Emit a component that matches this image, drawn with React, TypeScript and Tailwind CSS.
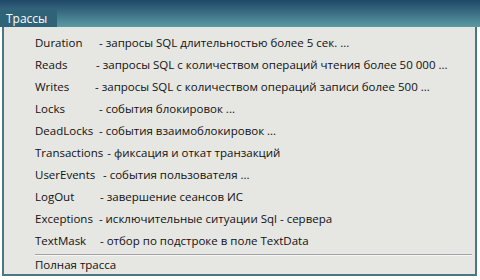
import React from "react";

const rows = [
  { name: "Duration", w: "min-w-[64px]", desc: "- запросы SQL длительностью более 5 сек. ..." },
  { name: "Reads", w: "min-w-[61px]", desc: "- запросы SQL с количеством операций чтения более 50 000 ..." },
  { name: "Writes", w: "min-w-[60px]", desc: "- запросы SQL с количеством операций записи более 500 ..." },
  { name: "Locks", w: "min-w-[64px]", desc: "- события блокировок ..." },
  { name: "DeadLocks", w: "min-w-[64px]", desc: "- события взаимоблокировок ..." },
  { name: "Transactions", w: "pr-[4px]", desc: "- фиксация и откат транзакций" },
  { name: "UserEvents", w: "min-w-[68px]", desc: "- события пользователя ..." },
  { name: "LogOut", w: "min-w-[65px]", desc: "- завершение сеансов ИС" },
  { name: "Exceptions", w: "pr-[6px]", desc: "- исключительные ситуации Sql - сервера" },
  { name: "TextMask", w: "min-w-[65px]", desc: "- отбор по подстроке в поле TextData" },
];

export default function App() {
  return (
    <div className="w-[480px] h-[280px] bg-white text-[11.5px] text-[#111111] font-['Open_Sans',sans-serif] overflow-hidden">
      <div className="h-[27px] bg-gradient-to-b from-[#1f4868] to-[#5c9ba2] flex items-end">
        <div className="h-[17px] w-[57px] bg-[#2f6378] text-white text-[12px] leading-[17px] pl-[6px]">
          Трассы
        </div>
      </div>
      <div className="ml-[2px] w-[475px] h-[249px] border-[2px] border-t-0 border-[#4b7682] bg-[#e6e6e2] pt-[5px]">
        {rows.map((r) => (
          <div key={r.name} className="h-[22px] flex items-center pl-[31px] whitespace-nowrap">
            <span className={`${r.w} shrink-0`}>{r.name}</span>
            <span>{r.desc}</span>
          </div>
        ))}
        <div className="ml-[31px] mr-[3px] mt-[2px] h-[2px] border-t border-[#a3a3a3] border-b border-b-[#f6f6f6]" />
        <div className="h-[18px] flex items-center pl-[31px]">Полная трасса</div>
      </div>
    </div>
  );
}
